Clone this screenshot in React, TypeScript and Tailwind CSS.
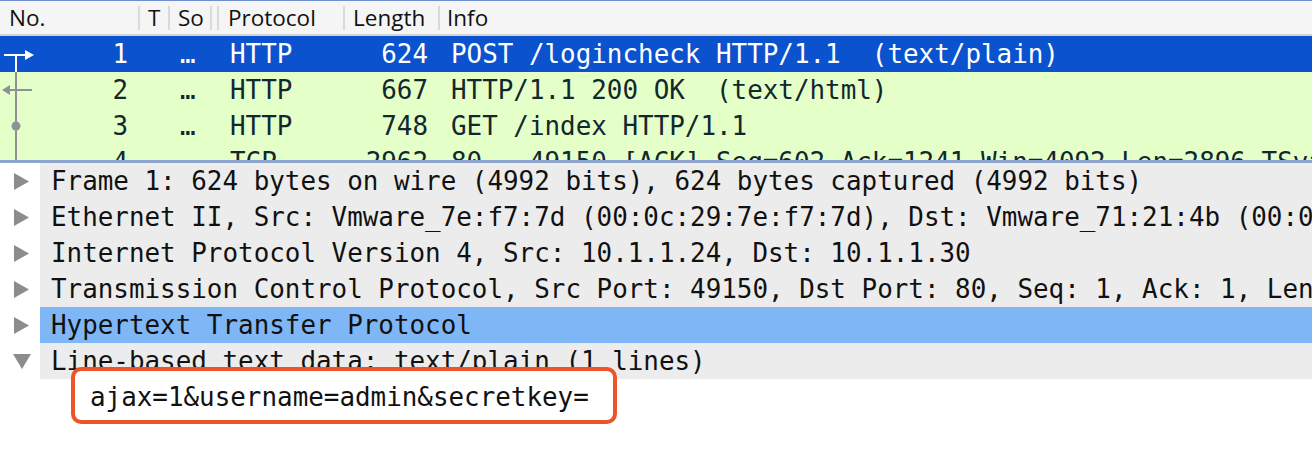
import React from "react";

const mono = { fontFamily: '"DejaVu Sans Mono", "Liberation Mono", monospace' };

type Row = { no: string; so: string; proto: string; len: string; info: string; kind: "sel" | "green" };

const rows: Row[] = [
  { no: "1", so: "…", proto: "HTTP", len: "624", info: "POST /logincheck HTTP/1.1  (text/plain)", kind: "sel" },
  { no: "2", so: "…", proto: "HTTP", len: "667", info: "HTTP/1.1 200 OK  (text/html)", kind: "green" },
  { no: "3", so: "…", proto: "HTTP", len: "748", info: "GET /index HTTP/1.1", kind: "green" },
  { no: "4", so: "", proto: "TCP", len: "2962", info: "80 → 49150 [ACK] Seq=602 Ack=1241 Win=4092 Len=2896 TSval=1 TSecr=1", kind: "green" },
];

function Graph({ i }: { i: number }) {
  if (i === 0)
    return (
      <svg width="40" height="36" className="absolute left-0 top-0">
        <line x1="4" y1="19" x2="27" y2="19" stroke="#ffffff" strokeWidth="2" />
        <polygon points="25,14 34,19 25,24" fill="#ffffff" />
        <line x1="16" y1="19" x2="16" y2="36" stroke="#ffffff" strokeWidth="2" />
      </svg>
    );
  if (i === 1)
    return (
      <svg width="40" height="36" className="absolute left-0 top-0">
        <line x1="16" y1="0" x2="16" y2="36" stroke="#8e9296" strokeWidth="2" />
        <line x1="9" y1="18" x2="32" y2="18" stroke="#8e9296" strokeWidth="2" />
        <polygon points="2,18 10,13 10,23" fill="#8e9296" />
      </svg>
    );
  if (i === 2)
    return (
      <svg width="40" height="36" className="absolute left-0 top-0">
        <line x1="16" y1="0" x2="16" y2="36" stroke="#8e9296" strokeWidth="2" />
        <circle cx="16" cy="18" r="4.5" fill="#8e9296" />
      </svg>
    );
  return (
    <svg width="40" height="36" className="absolute left-0 top-0">
      <line x1="16" y1="0" x2="16" y2="36" stroke="#8e9296" strokeWidth="2" />
    </svg>
  );
}

function Divider() {
  return <div className="w-[2px] h-[24px] bg-[#dadada] self-center shrink-0" />;
}

function Right() {
  return (
    <svg width="16" height="17" viewBox="0 0 16 17" className="shrink-0">
      <polygon points="0,0 15,8.5 0,17" fill="#8c8c8c" />
    </svg>
  );
}

function Down() {
  return (
    <svg width="18" height="15" viewBox="0 0 18 15" className="shrink-0">
      <polygon points="0,0 18,0 9,15" fill="#8c8c8c" />
    </svg>
  );
}

const details = [
  { t: "Frame 1: 624 bytes on wire (4992 bits), 624 bytes captured (4992 bits)", open: false, hl: false },
  { t: "Ethernet II, Src: Vmware_7e:f7:7d (00:0c:29:7e:f7:7d), Dst: Vmware_71:21:4b (00:0c:29:71:21:4b)", open: false, hl: false },
  { t: "Internet Protocol Version 4, Src: 10.1.1.24, Dst: 10.1.1.30", open: false, hl: false },
  { t: "Transmission Control Protocol, Src Port: 49150, Dst Port: 80, Seq: 1, Ack: 1, Len: 582", open: false, hl: false },
  { t: "Hypertext Transfer Protocol", open: false, hl: true },
  { t: "Line-based text data: text/plain (1 lines)", open: true, hl: false },
];

export default function App() {
  return (
    <div className="relative w-[1312px] h-[474px] overflow-hidden bg-white">
      <div className="h-[1px] bg-[#6f8fd0]" />
      {/* header */}
      <div
        className="flex h-[33px] items-center bg-[#f5f5f5] text-[22.5px] text-[#111111] border-b-2 border-[#d4d4d4] box-content"
        style={{ fontFamily: '"Open Sans", "Liberation Sans", sans-serif' }}
      >
        <div className="w-[138px] pl-[9px] shrink-0">No.</div>
        <Divider />
        <div className="w-[28px] pl-[8px] shrink-0">T</div>
        <Divider />
        <div className="w-[40px] pl-[8px] shrink-0">So</div>
        <Divider />
        <div className="w-[5px] shrink-0" />
        <Divider />
        <div className="w-[124px] pl-[9px] shrink-0">Protocol</div>
        <Divider />
        <div className="w-[93px] pl-[8px] shrink-0">Length</div>
        <Divider />
        <div className="pl-[7px]">Info</div>
      </div>
      {/* packet list */}
      <div className="h-[124px] overflow-hidden text-[25.9px] leading-[36px]" style={mono}>
        {rows.map((r, i) => (
          <div
            key={i}
            className={
              "flex h-[36px] whitespace-pre " +
              (r.kind === "sel" ? "bg-[#0b52ce] text-white" : "bg-[#e4ffc7] text-[#12272e]")
            }
          >
            <div className="relative w-[139px] pr-[11px] text-right shrink-0">
              <Graph i={i} />
              {r.no}
            </div>
            <div className="w-[30px] shrink-0" />
            <div className="w-[50px] pl-[11px] shrink-0">{r.so}</div>
            <div className="w-[126px] pl-[11px] shrink-0">{r.proto}</div>
            <div className="w-[95px] pr-[12px] text-right shrink-0">{r.len}</div>
            <div className="pl-[11px]">{r.info}</div>
          </div>
        ))}
      </div>
      <div className="h-[3px] bg-[#8ea5d0]" />
      {/* details */}
      <div className="text-[25.9px] leading-[36px] text-[#111111]" style={mono}>
        {details.map((d, i) => (
          <div key={i} className="flex h-[36px] whitespace-pre">
            <div className="w-[40px] shrink-0 flex items-center justify-center bg-white">
              {d.open ? (
                <div className="pl-[4px] pt-[1px]">
                  <Down />
                </div>
              ) : (
                <div className="pl-[4px]">
                  <Right />
                </div>
              )}
            </div>
            <div className={"flex-1 pl-[11px] overflow-hidden " + (d.hl ? "bg-[#7fb6f6]" : "bg-[#ececec]")}>{d.t}</div>
          </div>
        ))}
        <div className="h-[36px] bg-white" />
      </div>
      {/* annotation box */}
      <div className="absolute left-[71px] top-[367px] w-[546px] h-[57px] rounded-[10px] border-4 border-[#ec552a] bg-white" />
      <div
        className="absolute left-[90px] top-[379px] h-[36px] text-[25.9px] leading-[36px] text-[#111111] whitespace-pre"
        style={mono}
      >
        ajax=1&amp;username=admin&amp;secretkey=
      </div>
    </div>
  );
}
